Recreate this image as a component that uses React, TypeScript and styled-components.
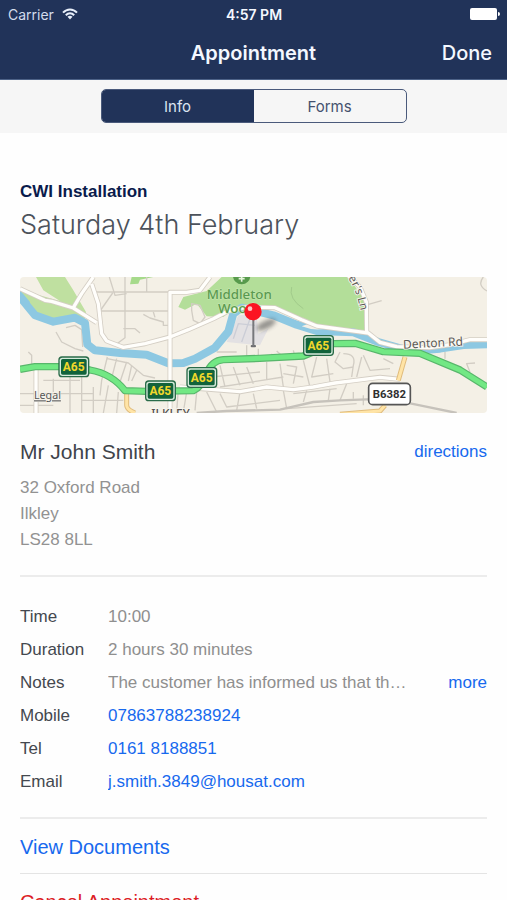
import React, { useState } from "react";
import styled, { createGlobalStyle } from "styled-components";

const navy = "#213359";
const blue = "#1769ee";
const helvetica = `"Liberation Sans", Arial, sans-serif`;
const system = `Inter, sans-serif`;

const GlobalStyle = createGlobalStyle`
  *, *::before, *::after { box-sizing: border-box; }
  body { margin: 0; background: #fefefe; font-family: ${helvetica}; }
  h1, h2, h3, p, dl, dd, dt, address { margin: 0; font-weight: 400; font-style: normal; }
  button { font: inherit; border: 0; padding: 0; background: none; cursor: pointer; }
`;

const Screen = styled.div`
  min-height: 100vh;
`;

const Header = styled.header`
  background: ${navy};
  color: #f4f8ff;
  font-family: ${system};
  border-bottom: 1px solid #4d6287;
`;

const StatusBar = styled.div`
  display: grid;
  grid-template-columns: 1fr auto 1fr;
  align-items: center;
  height: 28px;
  padding: 0 7px 0 8px;
  font-size: 14px;
`;

const Carrier = styled.span`
  display: flex;
  align-items: center;
  gap: 8px;
  color: #d3dcec;
`;

const Clock = styled.span`
  font-weight: 600;
`;

const BatteryIcon = styled.svg`
  justify-self: end;
`;

const NavBar = styled.div`
  display: grid;
  grid-template-columns: 1fr auto 1fr;
  align-items: center;
  height: 51px;
  padding: 0 15px 2px;
  font-size: 20px;
`;

const Title = styled.h1`
  grid-column: 2;
  font-size: 20px;
  font-weight: 600;
`;

const DoneButton = styled.button`
  justify-self: end;
  color: inherit;
  font-weight: 500;
`;

const TabStrip = styled.div`
  display: flex;
  justify-content: center;
  padding: 9px 16px 10px;
  background: #f6f6f6;
`;

const Segments = styled.div`
  display: flex;
  width: 306px;
  height: 34px;
  border: 1px solid #4a5a7b;
  border-radius: 5px;
  overflow: hidden;
  font-family: ${system};
  font-size: 15px;
`;

const Segment = styled.button<{ $active: boolean }>`
  flex: 1;
  background: ${(p) => (p.$active ? navy : "transparent")};
  color: ${(p) => (p.$active ? "#dbe3f1" : "#44516e")};
`;

const Content = styled.main`
  padding: 49px 20px 0;
`;

const JobType = styled.h2`
  color: #0a1b4c;
  font-size: 17px;
  line-height: 20px;
  font-weight: 700;
`;

const JobDate = styled.p`
  margin-top: 5px;
  color: #4c525b;
  font-family: ${system};
  font-size: 27px;
  line-height: 36px;
  font-weight: 300;
`;

const MapView = styled.svg`
  display: block;
  width: 100%;
  height: auto;
  margin-top: 34px;
  border-radius: 4px;
`;

const Customer = styled.section`
  padding: 26px 0 22px;
  border-bottom: 2px solid #ececec;
`;

const CustomerHead = styled.div`
  display: flex;
  justify-content: space-between;
  align-items: center;
`;

const CustomerName = styled.h3`
  color: #3f444b;
  font-size: 21px;
  line-height: 26px;
`;

const Link = styled.a`
  color: ${blue};
  font-size: 17px;
  text-decoration: none;
`;

const Address = styled.address`
  margin-top: 10px;
  color: #929292;
  font-size: 17px;
  line-height: 26px;
`;

const Details = styled.dl`
  padding: 23px 0 19px;
  border-bottom: 2px solid #ececec;
`;

const DetailRow = styled.div`
  display: grid;
  grid-template-columns: 88px minmax(0, 1fr) auto;
  align-items: center;
  height: 33px;
  font-size: 17px;
`;

const Label = styled.dt`
  color: #44484f;
`;

const Value = styled.dd`
  color: #8f8f8f;
  white-space: nowrap;
  overflow: hidden;
  text-overflow: ellipsis;
`;

const More = styled.dd`
  padding-left: 32px;
`;

const MoreButton = styled.button`
  color: ${blue};
`;

const Action = styled.button<{ $danger?: boolean }>`
  display: block;
  width: 100%;
  height: 55px;
  padding-top: 2px;
  border-bottom: 1px solid #e4e4e4;
  text-align: left;
  font-size: 20px;
  color: ${(p) => (p.$danger ? "#dc1d26" : blue)};
`;

function WifiIcon() {
  return (
    <svg width="16" height="12" viewBox="0 0 16 12" fill="none" stroke="#e8effa" strokeWidth="2" aria-hidden="true">
      <path d="M1 4.6C5 .3 11 .3 15 4.6" />
      <path d="M3.8 7.2C6.3 4.7 9.7 4.7 12.2 7.2" />
      <path d="M8 11.4 5.5 8.8Q8 6.8 10.5 8.8Z" fill="#e8effa" stroke="none" />
    </svg>
  );
}

const sideStreets = [
  "M268 0 285 55 320 50 M278 48 240 102H450 M315 0V182L285 205 M380 0V46 M228 45H450",
  "M310 155H345L360 168 M370 112 390 123 430 135V145H450 M405 121 400 105",
  "M108 165 125 195 165 215 190 222 M138 152 165 145 185 158 188 210 M25 225 35 235V265",
  "M262 240 245 310 240 355 M290 245 272 315 M320 255 300 315 M350 280 335 312 M262 245 325 258 370 295 405 303 M335 265 325 312",
  "M0 350H50 M70 310H180 M75 350H220 M100 305V345 M150 285V408 M185 290V408 M220 330V408 M265 325 250 408 M295 345 290 408 M185 370H310 M0 385H100",
  "M515 80 540 85 555 120 540 140 520 130 515 100Z M475 335 470 405 M500 345 490 405 M530 345 525 400",
  "M560 345 590 405 M570 280 590 330 M600 265 615 330 M575 300 720 285 M600 330 790 300 M640 270 660 325 M680 270 700 320 M740 255V310 M780 260 790 330",
  "M590 225H650 M680 205V244 M715 215V244 M755 230V242 M770 222 790 240 M820 220 825 240",
  "M800 265 830 270 820 320 M850 250 870 330 M890 240 875 300 940 290 M920 245 930 315 M790 290 850 300",
  "M960 225 945 255 970 275 1000 270 M970 230Q1010 230 1000 265L995 300 M1030 235 1050 280 1110 275 M1090 245 1120 260 M1010 300 1025 240",
  "M600 350 620 390 780 370 M660 345 650 400 M700 350 710 395 M790 340 800 395 1010 380 M860 340 850 375 M930 335 925 370 M980 320 960 370 M820 350 950 335",
  "M1030 355V385 M1000 345V365 M1035 85 1085 71 M1275 225V245 M1350 286 1340 260 1365 258 M1390 0Q1370 25 1401 42",
];

const whiteRoads = [
  "M0 35 75 70 95 73 160 93 230 137",
  "M220 0 185 50 160 92",
  "M215 20 235 80 245 170 260 192 310 211 375 200 450 180 505 158 580 125 625 102 680 90 765 92 845 128 890 147 1015 164 1045 168 1080 196 1130 209 1230 212 1290 203 1350 188 1401 188",
  "M570 0 540 40 500 46H450V408",
  "M1040 165 1039 75 1020 30 985 -4",
  "M480 330 545 335 660 344 740 330 820 338 880 330 945 318 1080 301 1140 307",
  "M48 275V408",
];

const riverPath =
  "M0 60 45 115 100 134 165 122 195 138 202 202 225 220 300 228 380 233 445 259 490 258 525 245 585 212 625 164 640 110 665 92 760 115 830 143 890 162 1000 166 1075 195 1170 222 1260 215 1330 204 1401 202";

const a65Path =
  "M0 277 45 269 120 269 210 279Q275 290 315 341L380 343 520 341Q545 330 560 290T610 248L720 244 850 237 940 200 1005 199 1090 224 1200 229 1320 279 1401 330";

function RoadSign({ x, y }: { x: number; y: number }) {
  return (
    <g>
      <rect x={x} y={y} width="93" height="63" rx="11" fill="#2a6b49" />
      <rect x={x + 4} y={y + 4} width="85" height="55" rx="8" fill="#d5eadb" />
      <rect x={x + 8} y={y + 8} width="77" height="47" rx="5" fill="#11633b" />
      <text x={x + 46} y={y + 44} textAnchor="middle" fontFamily="'Liberation Sans Narrow', Roboto" fontSize="36" fontWeight="700" fill="#f0d72b">
        A65
      </text>
    </g>
  );
}

function AppointmentMap() {
  return (
    <MapView viewBox="0 0 1401 408" role="img" aria-label="Map of the appointment address">
      <defs>
        <filter id="shadow" x="-50%" y="-50%" width="200%" height="200%">
          <feGaussianBlur stdDeviation="7" />
        </filter>
        <path id="lane" d="M984 4Q1015 45 1024 120" />
      </defs>
      <rect width="1401" height="408" fill="#f4f0e6" />
      <path d="M48 0 70 40 120 72 0 38V70L40 112 95 125 150 115 195 125 198 105 160 40 135 0Z" fill="#bfe0a0" />
      <path d="M335 0 330 22 355 20 360 8 400 0Z" fill="#a6da8b" />
      <path d="M605 0 560 42 490 60 475 90 495 98 530 80 560 118 610 120 640 95 690 88 765 90 845 126 890 145 1035 164 1038 75 985 0Z" fill="#b3de99" />
      <path d="M620 195 655 115 710 110 715 170 745 155 720 205Z" fill="#e3e1e3" />
      <path d="M640 185 655 140 705 145 M665 195 690 125" fill="none" stroke="#cbcdd6" strokeWidth="4" />
      <path d="M815 30Q805 65 850 95" fill="none" stroke="#a2cb8b" strokeWidth="3" />

      <g fill="none" strokeLinejoin="round">
        {sideStreets.map((d) => (
          <path key={d} d={d} stroke="#d2cdc4" strokeWidth="4" />
        ))}
        <path d={riverPath} stroke="#8dc8e2" strokeWidth="24" />
        <path d="M0 40 30 75 20 90 0 75Z" fill="#8dc8e2" />
        <path d="M845 148Q880 130 915 155Q880 162 845 148Z" fill="#f4f0e6" />
        {whiteRoads.map((d) => (
          <path key={d} d={d} stroke="#d4cec4" strokeWidth="15" />
        ))}
        {whiteRoads.map((d) => (
          <path key={d} d={d} stroke="#fffefb" strokeWidth="10" />
        ))}
        <path d="M530 408 620 402 780 398 880 375 960 370 1100 365 1200 385 1310 408" stroke="#c6c2bb" strokeWidth="7" />
        <path d="M320 350V385Q320 398 345 408 M1155 240 1135 310 M1095 385 1080 402 960 412" stroke="#e0bc7d" strokeWidth="15" />
        <path d="M320 350V385Q320 398 345 408 M1155 240 1135 310 M1095 385 1080 402 960 412" stroke="#ffe4a6" strokeWidth="9" />
        <path d={a65Path} stroke="#58b66b" strokeWidth="22" />
        <path d={a65Path} stroke="#72e884" strokeWidth="15" />
      </g>

      <circle cx="665" cy="-4" r="26" fill="#579a4c" />
      <path d="M665 0V14 M656 5H674" stroke="#e7f5dc" strokeWidth="5" />
      <g fontFamily="'Noto Sans', sans-serif" fontWeight="500" fontSize="40" fill="#5a9a50" stroke="#c8e7b4" strokeWidth="3" paintOrder="stroke">
        <text x="560" y="66">Middleton</text>
        <text x="594" y="108">Woods</text>
      </g>
      <g fontFamily="'Noto Sans', sans-serif" fontSize="36" fill="#5d5a57" stroke="#faf7f0" strokeWidth="5" paintOrder="stroke">
        <text x="1150" y="215" transform="rotate(-3 1150 215)">Denton Rd</text>
        <text fontSize="34">
          <textPath href="#lane">er's Ln</textPath>
        </text>
      </g>
      <text x="394" y="424" fontFamily="'Noto Sans', sans-serif" fontWeight="500" fontSize="36" fill="#55514f" stroke="#faf7f0" strokeWidth="5" paintOrder="stroke">
        ILKLEY
      </text>
      <text x="42" y="367" fontFamily="'Noto Sans', sans-serif" fontSize="32" fill="#555" stroke="#f8f5ee" strokeWidth="3" paintOrder="stroke" textDecoration="underline">
        Legal
      </text>

      <RoadSign x={115} y={238} />
      <RoadSign x={375} y={310} />
      <RoadSign x={499} y={270} />
      <RoadSign x={849} y={174} />

      <rect x="1046" y="319" width="125" height="64" rx="12" fill="#fff" stroke="#555" strokeWidth="5" />
      <text x="1108" y="363" textAnchor="middle" fontFamily="'Liberation Sans Narrow', Roboto" fontSize="34" fontWeight="700" fill="#303030">
        B6382
      </text>

      <ellipse cx="738" cy="143" rx="32" ry="12" transform="rotate(-25 738 143)" fill="#555" opacity="0.6" filter="url(#shadow)" />
      <rect x="692" y="204" width="16" height="7" rx="3" fill="#6d6d70" />
      <path d="M700 125V208" stroke="#77787c" strokeWidth="6" />
      <circle cx="699" cy="104" r="26" fill="#fb1422" />
      <circle cx="690" cy="95" r="7" fill="#ffc5c5" />
    </MapView>
  );
}

export default function App() {
  const [tab, setTab] = useState("Info");

  return (
    <Screen>
      <GlobalStyle />
      <Header>
        <StatusBar>
          <Carrier>
            Carrier
            <WifiIcon />
          </Carrier>
          <Clock>4:57 PM</Clock>
          <BatteryIcon width="30" height="12" viewBox="0 0 30 12" fill="#fff" aria-hidden="true">
            <rect width="27" height="12" rx="2" />
            <path d="M28 4Q30 4 30 6T28 8Z" />
          </BatteryIcon>
        </StatusBar>
        <NavBar>
          <Title>Appointment</Title>
          <DoneButton type="button">Done</DoneButton>
        </NavBar>
      </Header>
      <TabStrip>
        <Segments role="tablist">
          {["Info", "Forms"].map((name) => (
            <Segment
              key={name}
              type="button"
              role="tab"
              aria-selected={tab === name}
              $active={tab === name}
              onClick={() => setTab(name)}
            >
              {name}
            </Segment>
          ))}
        </Segments>
      </TabStrip>

      <Content>
        <JobType>CWI Installation</JobType>
        <JobDate>Saturday 4th February</JobDate>
        <AppointmentMap />

        <Customer>
          <CustomerHead>
            <CustomerName>Mr John Smith</CustomerName>
            <Link href="#directions">directions</Link>
          </CustomerHead>
          <Address>
            32 Oxford Road
            <br />
            Ilkley
            <br />
            LS28 8LL
          </Address>
        </Customer>

        <Details>
          <DetailRow>
            <Label>Time</Label>
            <Value>10:00</Value>
          </DetailRow>
          <DetailRow>
            <Label>Duration</Label>
            <Value>2 hours 30 minutes</Value>
          </DetailRow>
          <DetailRow>
            <Label>Notes</Label>
            <Value>The customer has informed us that th…</Value>
            <More>
              <MoreButton type="button">more</MoreButton>
            </More>
          </DetailRow>
          <DetailRow>
            <Label>Mobile</Label>
            <Value>
              <Link href="tel:07863788238924">07863788238924</Link>
            </Value>
          </DetailRow>
          <DetailRow>
            <Label>Tel</Label>
            <Value>
              <Link href="tel:01618188851">0161 8188851</Link>
            </Value>
          </DetailRow>
          <DetailRow>
            <Label>Email</Label>
            <Value>
              <Link href="mailto:j.smith.3849@housat.com">j.smith.3849@housat.com</Link>
            </Value>
          </DetailRow>
        </Details>

        <Action type="button">View Documents</Action>
        <Action type="button" $danger>
          Cancel Appointment
        </Action>
      </Content>
    </Screen>
  );
}
